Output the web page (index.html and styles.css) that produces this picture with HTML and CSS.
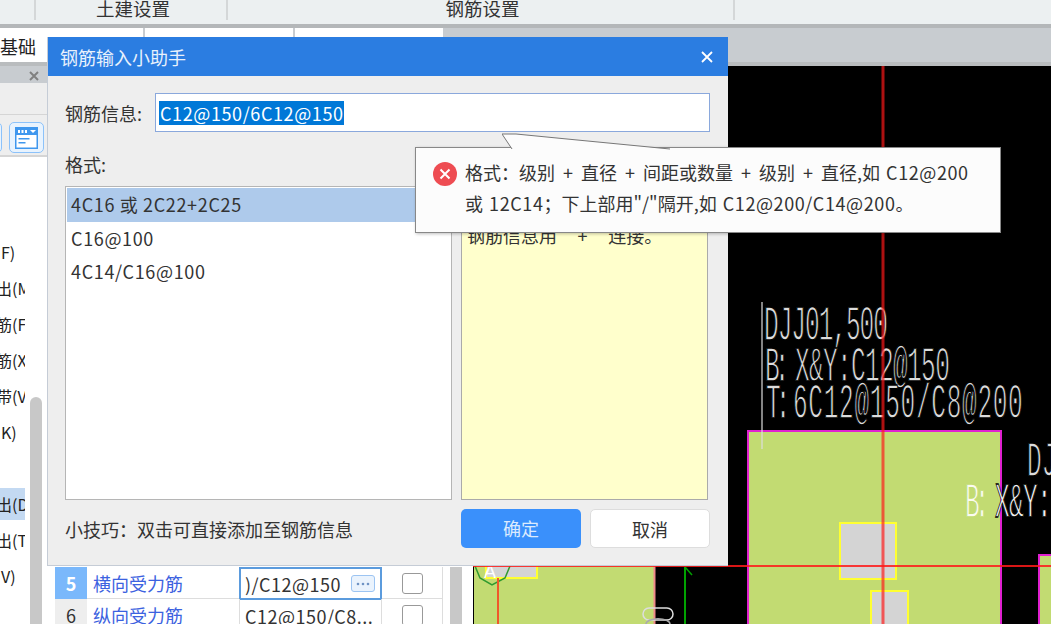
FILE: index.html
```html
<!DOCTYPE html>
<html lang="zh-CN">

<head>
    <meta charset="UTF-8">
    <title>钢筋输入小助手</title>
    <link rel="stylesheet" href="styles.css">
</head>

<body>
    <div class="app">

        <!-- Top settings bar -->
        <div class="topbar">
            <div class="topbar-cell cell-a"></div>
            <div class="topbar-cell cell-b">土建设置</div>
            <div class="topbar-cell cell-c">钢筋设置</div>
        </div>

        <!-- Tabs -->
        <div class="tabs">
            <div class="tab tab-a">基础</div>
            <div class="tab tab-b"></div>
            <div class="tab tab-c"></div>
        </div>

        <div class="workspace">

            <!-- Left side panel -->
            <div class="side">
                <div class="side-head">
                    <svg width="10" height="10" viewBox="0 0 10 10">
                        <path d="M1 1l8 8M9 1L1 9" stroke="#808080" stroke-width="2" />
                    </svg>
                </div>
                <div class="side-tools"></div>
                <div class="side-icons">
                    <div class="icon-btn icon-btn-prev"></div>
                    <div class="icon-btn">
                        <svg width="23" height="22" viewBox="0 0 23 22">
                            <rect x="0" y="0" width="23" height="22" fill="#3f97ee" />
                            <rect x="1.500" y="8" width="20" height="12.500" fill="#fff" />
                            <path d="M3 3h2v3H3zM6.500 3h2v3h-2zM10 3h2v3h-2z" fill="#fff" />
                            <path d="M15 3h6l-3 3z" fill="#fff" />
                            <path d="M3.500 11h11v1.500h-11zM3.500 15h7v1.500h-7z" fill="#3f97ee" />
                        </svg>
                    </div>
                </div>
                <div class="side-body">
                    <div class="side-list">
                        <div class="side-item"></div>
                        <div class="side-item"></div>
                        <div class="side-item">F)</div>
                        <div class="side-item item-cut">出(M</div>
                        <div class="side-item item-cut">筋(F</div>
                        <div class="side-item item-cut">筋(X</div>
                        <div class="side-item item-cut">带(V</div>
                        <div class="side-item">K)</div>
                        <div class="side-item"></div>
                        <div class="side-item item-cut item-on">出(D</div>
                        <div class="side-item item-cut">出(T</div>
                        <div class="side-item">V)</div>
                    </div>
                    <div class="side-scroll"></div>
                </div>
            </div>

            <!-- Properties table -->
            <div class="props">
                <div class="props-table">
                    <div class="row">
                        <div class="row-num num-on">5</div>
                        <div class="row-name">横向受力筋</div>
                        <div class="row-value value-on">
                            <span class="value-text">)/C12@150</span>
                            <span class="dots">
                                <svg width="14" height="4" viewBox="0 0 14 4">
                                    <circle cx="2" cy="2" r="1.300" fill="#6f93c4" />
                                    <circle cx="7" cy="2" r="1.300" fill="#6f93c4" />
                                    <circle cx="12" cy="2" r="1.300" fill="#6f93c4" />
                                </svg>
                            </span>
                        </div>
                        <div class="row-check"><span class="check"></span></div>
                    </div>
                    <div class="row">
                        <div class="row-num">6</div>
                        <div class="row-name">纵向受力筋</div>
                        <div class="row-value"><span class="value-text">C12@150/C8...</span></div>
                        <div class="row-check"><span class="check"></span></div>
                    </div>
                </div>
                <div class="props-scroll"></div>
            </div>

            <!-- Drawing canvas -->
            <svg class="cad" width="578" height="558" viewBox="473 66 578 558">
                <rect x="473" y="66" width="578" height="558" fill="#000" />

                <rect x="474" y="566" width="181" height="70" fill="#c2db72" />
                <line x1="654.500" y1="566" x2="654.500" y2="624" stroke="#f08a8a" stroke-width="2" />
                <rect x="486" y="560" width="51" height="18" fill="#d4d4d4" stroke="#ffff30" stroke-width="2" />
                <path d="M475 566l5 12 12 7 13-7 5-12" fill="none" stroke="#2f9a2f" stroke-width="1.500" />
                <text class="cad-a" x="484" y="578">A</text>
                <line x1="498" y1="578" x2="498" y2="624" stroke="#f0582a" stroke-width="2" />

                <rect x="748" y="431" width="253" height="220" fill="#c2db72" stroke="#e020d0" stroke-width="2" />
                <rect x="840" y="523" width="56" height="56" fill="#d4d4d4" stroke="#ffff30" stroke-width="2" />
                <rect x="871" y="591" width="37" height="50" fill="#d4d4d4" stroke="#ffff30" stroke-width="2" />
                <rect x="1039" y="555" width="30" height="80" fill="#c2db72" stroke="#e020d0" stroke-width="2" />

                <line x1="685" y1="567" x2="685" y2="624" stroke="#00d800" stroke-width="1.500" />
                <line x1="685" y1="567" x2="692" y2="575" stroke="#00a000" stroke-width="1.500" />
                <rect x="643" y="608" width="30" height="12" rx="6" fill="none" stroke="#ddd" stroke-width="1.500" />
                <path d="M646 624a9 4 0 0 1 24 0" fill="none" stroke="#aaa" stroke-width="1.500" />

                <line x1="762" y1="302" x2="762" y2="449" stroke="#ddd" stroke-width="1.200" />
                <text class="cad-text" transform="translate(764 340) scale(.49 1)" textLength="253">DJJ01,500</text>
                <text class="cad-text" transform="translate(765 381) scale(.49 1)"><tspan x="0">B</tspan><tspan x="20">:</tspan></text>
                <text class="cad-text" transform="translate(795 381) scale(.49 1)" textLength="316">X&amp;Y:C12@150</text>
                <text class="cad-text" transform="translate(766 418) scale(.49 1)"><tspan x="0">T</tspan><tspan x="20">:</tspan></text>
                <text class="cad-text" transform="translate(793 418) scale(.49 1)" textLength="469">6C12@150/C8@200</text>
                <text class="cad-text" transform="translate(1027 476) scale(.49 1)" textLength="60">DJ</text>
                <text class="cad-text cad-on-green" transform="translate(965 517) scale(.49 1)"><tspan x="0">B</tspan><tspan x="20">:</tspan></text>
                <text class="cad-text cad-bright" transform="translate(995 517) scale(.49 1)" textLength="316">X&amp;Y:C12@150</text>

                <line x1="883" y1="66" x2="883" y2="624" stroke="#ff1a1a" stroke-width="3" opacity=".68" />
                <line x1="473" y1="566" x2="1051" y2="566" stroke="#ff1a1a" stroke-width="2" opacity=".85" />
            </svg>
        </div>

        <!-- Rebar input dialog -->
        <div class="dialog">
            <div class="dialog-title">
                <span>钢筋输入小助手</span>
                <svg width="12" height="12" viewBox="0 0 12 12">
                    <path d="M1 1l10 10M11 1L1 11" stroke="#fff" stroke-width="1.800" />
                </svg>
            </div>
            <div class="dialog-body">
                <div class="field">
                    <label class="field-label">钢筋信息:</label>
                    <div class="field-input"><span class="selected">C12@150/6C12@150</span></div>
                </div>
                <div class="format-label">格式:</div>
                <div class="format-row">
                    <div class="format-list">
                        <div class="format-item format-on">4C16 或 2C22+2C25</div>
                        <div class="format-item">C16@100</div>
                        <div class="format-item">4C14/C16@100</div>
                    </div>
                    <div class="note">钢筋信息用 "+" 连接。</div>
                </div>
                <div class="dialog-foot">
                    <div class="tip">小技巧&#xFF1A;双击可直接添加至钢筋信息</div>
                    <div class="btn btn-ok">确定</div>
                    <div class="btn btn-cancel">取消</div>
                </div>
            </div>
        </div>

        <!-- Validation tooltip -->
        <div class="balloon">
            <svg class="balloon-tail" width="170" height="17" viewBox="0 0 170 17">
                <path d="M0 1L10 16H168L65 6 14 1z" fill="#fcfcfc" />
                <path d="M10 16L0 1h14l51 5 103 10" fill="none" stroke="#777" stroke-width="1" />
            </svg>
            <svg class="balloon-icon" width="24" height="24" viewBox="0 0 24 24">
                <circle cx="12" cy="12" r="12" fill="#ee4c52" />
                <path d="M7.500 7.500l9 9M16.500 7.500l-9 9" stroke="#fff" stroke-width="2" />
            </svg>
            <div class="balloon-text">格式&#xFF1A;级别<span class="plus">+</span>直径<span class="plus">+</span>间距或数量<span class="plus">+</span>级别<span class="plus">+</span>直径,如 <span class="lat">C12@200</span><br>或 <span class="lat">12C14</span>&#xFF1B;下上部用"/"隔开,如 <span class="lat">C12@200/C14@200</span>。</div>
        </div>

    </div>
</body>

</html>
```
FILE: styles.css
```css
/* Basic reset */
body {
    margin: 0;
    overflow: hidden;
    font-family: "Noto Sans CJK SC", "Noto Sans", sans-serif;
    color: #333;
    background: #c8ccd0;
}

.app {
    position: relative;
    width: 1051px;
    height: 624px;
    overflow: hidden;
    display: flex;
    flex-direction: column;
}

/* Top settings bar */
.topbar {
    display: flex;
    flex: none;
    height: 24px;
    background: #ecf0f1;
    border-bottom: 4px solid #b4b7b9;
    font-size: 18.500px;
    line-height: 17px;
    text-align: center;
}

.topbar-cell {
    height: 20px;
    padding-left: 4px;
    border-right: 2px solid #d4d7d8;
    box-sizing: border-box;
}

.cell-a { width: 36px; }
.cell-b { width: 192px; }
.cell-c { width: 507px; }

/* Tabs */
.tabs {
    display: flex;
    flex: none;
    height: 38px;
    box-sizing: border-box;
    border-bottom: 4px solid #b9bcbe;
    background: #c8ccd0;
}

.tab {
    background: #fff;
    border-right: 2px solid #c8ccd0;
    box-sizing: border-box;
    font-size: 18px;
    line-height: 36px;
    color: #222;
}

.tab-a { width: 145px; }
.tab-b { width: 150px; }
.tab-c { width: 148px; border-right: none; }

/* Workspace */
.workspace {
    display: flex;
    flex: 1;
    min-height: 0;
}

/* Left side panel */
.side {
    flex: none;
    width: 47px;
    background: #fff;
    overflow: hidden;
}

.side-head {
    height: 17px;
    box-sizing: border-box;
    padding: 5px 8px 0 0;
    background: #c8ccd0;
    text-align: right;
}

.side-head svg {
    display: inline-block;
    vertical-align: top;
}

.side-tools {
    height: 32px;
    background: #eeeeee;
    border-bottom: 1px solid #d5d5d5;
    box-sizing: border-box;
}

.side-icons {
    display: flex;
    gap: 7px;
    margin-left: -33px;
    height: 42px;
    box-sizing: border-box;
    padding-top: 7px;
    background: #eeeeee;
    border-bottom: 2px solid #d5d5d5;
}

.icon-btn {
    flex: none;
    width: 35px;
    height: 31px;
    box-sizing: border-box;
    border: 1.500px solid #8cc2fa;
    border-radius: 5px;
    background: #e8f3fe;
    display: flex;
    justify-content: center;
    align-items: center;
}

.side-body {
    display: flex;
}

.side-list {
    flex: none;
    width: 25px;
    overflow: hidden;
    padding-top: 7px;
    font-size: 16px;
    white-space: nowrap;
    color: #222;
}

.side-item {
    height: 32px;
    margin-bottom: 4px;
    line-height: 32px;
    padding-left: 1px;
}

.item-cut {
    padding-left: 0;
    text-indent: -4px;
}

.item-on {
    background: #c3d9f2;
}

.side-scroll {
    flex: none;
    width: 12px;
    height: 227px;
    margin: 240px 0 0 5px;
    border-radius: 6px 6px 0 0;
    background: #c8c8c8;
}

/* Properties table */
.props {
    flex: none;
    width: 426px;
    display: flex;
    box-sizing: border-box;
    padding: 501px 0 0 8px;
    background: #fff;
    overflow: hidden;
}

.props-table {
    flex: none;
    width: 388px;
    font-size: 18px;
}

.row {
    display: grid;
    grid-template-columns: 32px 152px 143px 61px;
    height: 32px;
    border-bottom: 1px solid #dddddd;
    box-sizing: border-box;
}

.row-num {
    background: #eeeeee;
    text-align: center;
    line-height: 32px;
    color: #333;
}

.num-on {
    background: #7ab8fb;
    color: #fff;
    font-weight: bold;
}

.row-name {
    padding-left: 6px;
    line-height: 33px;
    color: #3c62e0;
}

.row-value {
    display: flex;
    align-items: center;
    justify-content: space-between;
    box-sizing: border-box;
    padding: 0 5px;
    border-left: 1px solid #dddddd;
    border-right: 1px solid #dddddd;
    overflow: hidden;
}

.value-on {
    border: 2px solid #5b9bdd;
    padding: 0 5px 0 4px;
}

.value-text {
    white-space: nowrap;
    letter-spacing: 0.5px;
}

.dots {
    flex: none;
    width: 24px;
    height: 17px;
    box-sizing: border-box;
    border: 1px solid #9cc4f2;
    border-radius: 3px;
    background: #eaf3fd;
    display: flex;
    justify-content: center;
    align-items: center;
}

.row-check {
    display: flex;
    justify-content: center;
    align-items: center;
    border-right: 1px solid #dddddd;
}

.check {
    width: 21px;
    height: 21px;
    box-sizing: border-box;
    border: 1px solid #999;
    border-radius: 3px;
    background: #fff;
}

.props-scroll {
    flex: none;
    width: 12px;
    margin-left: 7px;
    background: #c8c8c8;
}

/* Drawing canvas */
.cad {
    flex: none;
    display: block;
}

.cad-text {
    font-family: "Liberation Mono", monospace;
    font-size: 50px;
    fill: #dcdcdc;
    stroke: #000;
    stroke-width: 1.300px;
}

.cad-bright {
    fill: #f2f2f2;
}

.cad-on-green {
    fill: #fbfbf0;
    stroke: #c2db72;
}

.cad-a {
    font-family: "Liberation Sans", sans-serif;
    font-size: 18px;
    fill: #fff;
}

/* Rebar input dialog */
.dialog {
    position: absolute;
    left: 47px;
    top: 37px;
    width: 681px;
    height: 529px;
    box-sizing: border-box;
    display: flex;
    flex-direction: column;
    background: #eeeeee;
    border-left: 1px solid #c5ccd6;
    border-bottom: 1px solid #c5ccd6;
    font-size: 18px;
}

.dialog-title {
    flex: none;
    height: 39px;
    box-sizing: border-box;
    display: flex;
    justify-content: space-between;
    align-items: center;
    padding: 0 15px 0 12px;
    background: #2b7de1;
    color: #e8f1fc;
}

.dialog-body {
    flex: 1;
    padding: 17px 17px 0 17px;
}

.field {
    display: flex;
    align-items: center;
}

.field-label {
    flex: none;
    width: 90px;
}

.field-input {
    flex: none;
    width: 555px;
    height: 39px;
    box-sizing: border-box;
    padding-left: 3px;
    display: flex;
    align-items: center;
    background: #fff;
    border: 1px solid #8aa8dc;
}

.selected {
    height: 24px;
    line-height: 24px;
    padding-left: 1px;
    background: #0078d7;
    color: #fff;
    letter-spacing: 0.6px;
}

.format-label {
    margin-top: 20px;
    height: 34px;
    line-height: 24px;
}

.format-row {
    display: flex;
    gap: 9px;
    height: 314px;
}

.format-list {
    flex: none;
    width: 387px;
    box-sizing: border-box;
    padding: 1px;
    background: #fff;
    border: 1px solid #b5b5b5;
}

.format-item {
    height: 33.500px;
    line-height: 32px;
    padding-left: 4px;
    letter-spacing: 0.65px;
}

.format-on {
    background: #aecaeb;
}

.note {
    flex: none;
    width: 247px;
    box-sizing: border-box;
    padding: 36px 0 0 5px;
    background: #ffffcc;
    border: 1px solid #aaaaaa;
    line-height: 24px;
    word-spacing: 8px;
    white-space: nowrap;
}

.dialog-foot {
    display: flex;
    align-items: center;
    margin-top: 9px;
}

.tip {
    flex: none;
    width: 396px;
}

.btn {
    flex: none;
    width: 120px;
    height: 39px;
    box-sizing: border-box;
    border-radius: 5px;
    line-height: 38px;
    text-align: center;
}

.btn-ok {
    background: #3a90fb;
    color: #dcebfe;
    margin-right: 9px;
}

.btn-cancel {
    background: #fff;
    border: 1px solid #dddddd;
}

/* Validation tooltip */
.balloon {
    position: absolute;
    left: 415px;
    top: 147px;
    width: 586px;
    height: 86px;
    box-sizing: border-box;
    display: flex;
    gap: 8px;
    padding: 14px 0 0 17px;
    background: #fcfcfc;
    border: 1px solid #888;
    box-shadow: 1px 1px 3px rgba(0, 0, 0, 0.25);
}

.balloon-tail {
    position: absolute;
    left: 86px;
    top: -15px;
}

.balloon-icon {
    flex: none;
}

.balloon-text {
    font-size: 18px;
    line-height: 31px;
    margin-top: -5px;
    white-space: nowrap;
    word-spacing: 2px;
}

.plus {
    margin: 0 8px;
}

.lat {
    letter-spacing: 0.6px;
}
```
